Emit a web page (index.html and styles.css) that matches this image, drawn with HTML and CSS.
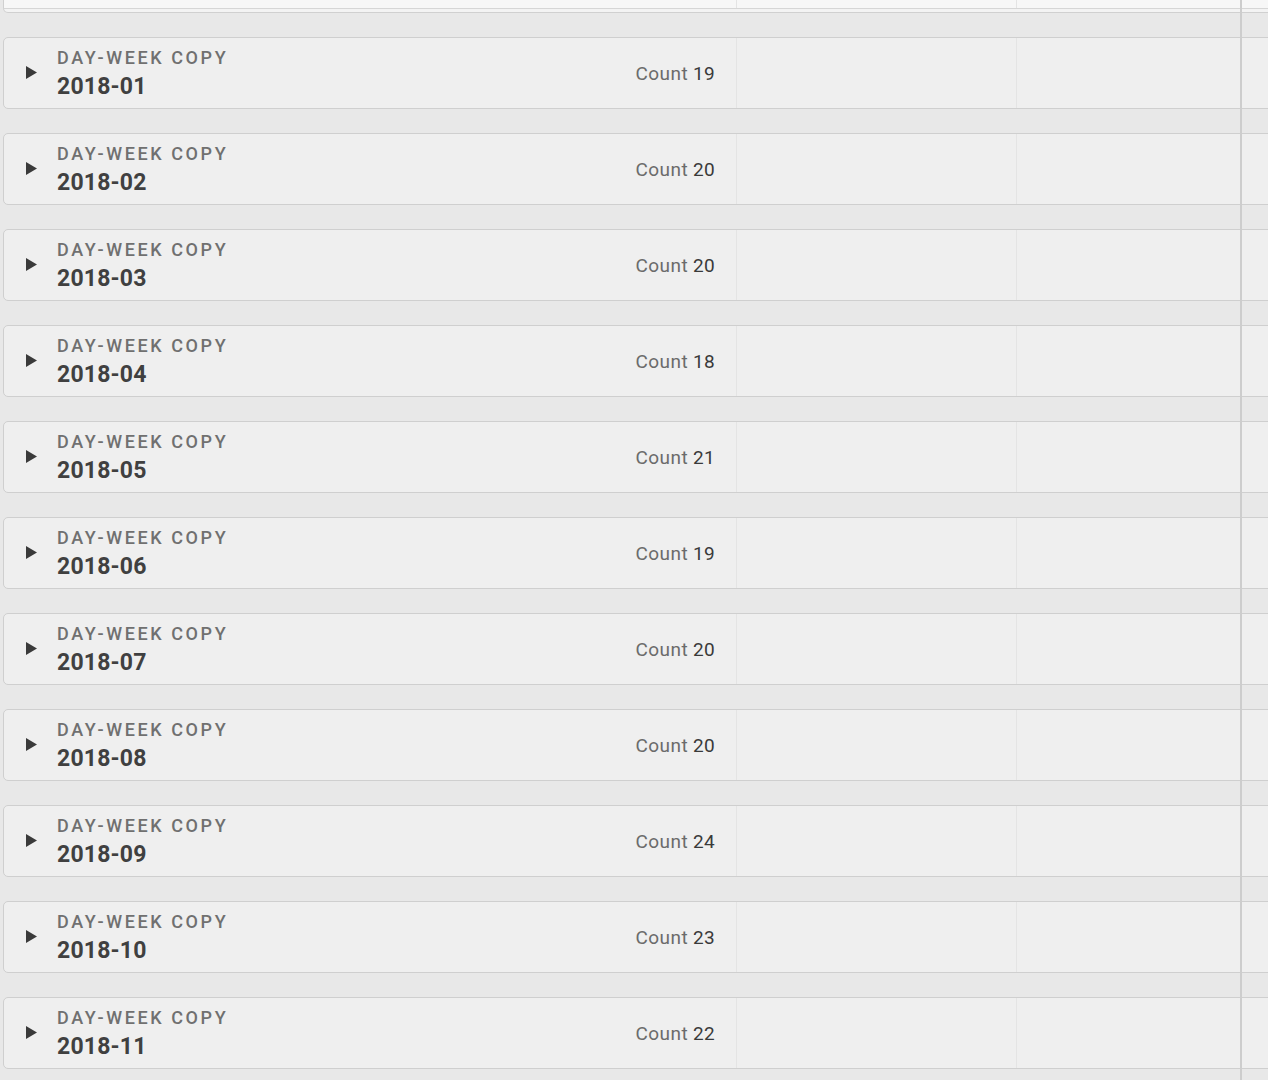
FILE: index.html
```html
<!DOCTYPE html>
<html>
<head>
<meta charset="utf-8">
<link rel="stylesheet" href="styles.css">
</head>
<body>
<div class="board">
  <div class="card-tail">
    <div class="tail-row">
      <div class="tail-cell c1"></div>
      <div class="tail-cell c2"></div>
      <div class="tail-cell c3"></div>
    </div>
    <div class="tail-foot"></div>
  </div>

  <div class="groups">
    <div class="group">
      <div class="cell c1">
        <svg class="caret" width="11" height="13" viewBox="0 0 11 13"><polygon points="0,0 11,6.5 0,13" fill="#3a3a3a"/></svg>
        <div class="titles"><div class="label">DAY-WEEK COPY</div><div class="value">2018-01</div></div>
        <div class="count"><span class="count-word">Count</span> <span class="count-num">19</span></div>
      </div>
      <div class="cell c2"></div><div class="cell c3"></div>
    </div>
    <div class="group">
      <div class="cell c1">
        <svg class="caret" width="11" height="13" viewBox="0 0 11 13"><polygon points="0,0 11,6.5 0,13" fill="#3a3a3a"/></svg>
        <div class="titles"><div class="label">DAY-WEEK COPY</div><div class="value">2018-02</div></div>
        <div class="count"><span class="count-word">Count</span> <span class="count-num">20</span></div>
      </div>
      <div class="cell c2"></div><div class="cell c3"></div>
    </div>
    <div class="group">
      <div class="cell c1">
        <svg class="caret" width="11" height="13" viewBox="0 0 11 13"><polygon points="0,0 11,6.5 0,13" fill="#3a3a3a"/></svg>
        <div class="titles"><div class="label">DAY-WEEK COPY</div><div class="value">2018-03</div></div>
        <div class="count"><span class="count-word">Count</span> <span class="count-num">20</span></div>
      </div>
      <div class="cell c2"></div><div class="cell c3"></div>
    </div>
    <div class="group">
      <div class="cell c1">
        <svg class="caret" width="11" height="13" viewBox="0 0 11 13"><polygon points="0,0 11,6.5 0,13" fill="#3a3a3a"/></svg>
        <div class="titles"><div class="label">DAY-WEEK COPY</div><div class="value">2018-04</div></div>
        <div class="count"><span class="count-word">Count</span> <span class="count-num">18</span></div>
      </div>
      <div class="cell c2"></div><div class="cell c3"></div>
    </div>
    <div class="group">
      <div class="cell c1">
        <svg class="caret" width="11" height="13" viewBox="0 0 11 13"><polygon points="0,0 11,6.5 0,13" fill="#3a3a3a"/></svg>
        <div class="titles"><div class="label">DAY-WEEK COPY</div><div class="value">2018-05</div></div>
        <div class="count"><span class="count-word">Count</span> <span class="count-num">21</span></div>
      </div>
      <div class="cell c2"></div><div class="cell c3"></div>
    </div>
    <div class="group">
      <div class="cell c1">
        <svg class="caret" width="11" height="13" viewBox="0 0 11 13"><polygon points="0,0 11,6.5 0,13" fill="#3a3a3a"/></svg>
        <div class="titles"><div class="label">DAY-WEEK COPY</div><div class="value">2018-06</div></div>
        <div class="count"><span class="count-word">Count</span> <span class="count-num">19</span></div>
      </div>
      <div class="cell c2"></div><div class="cell c3"></div>
    </div>
    <div class="group">
      <div class="cell c1">
        <svg class="caret" width="11" height="13" viewBox="0 0 11 13"><polygon points="0,0 11,6.5 0,13" fill="#3a3a3a"/></svg>
        <div class="titles"><div class="label">DAY-WEEK COPY</div><div class="value">2018-07</div></div>
        <div class="count"><span class="count-word">Count</span> <span class="count-num">20</span></div>
      </div>
      <div class="cell c2"></div><div class="cell c3"></div>
    </div>
    <div class="group">
      <div class="cell c1">
        <svg class="caret" width="11" height="13" viewBox="0 0 11 13"><polygon points="0,0 11,6.5 0,13" fill="#3a3a3a"/></svg>
        <div class="titles"><div class="label">DAY-WEEK COPY</div><div class="value">2018-08</div></div>
        <div class="count"><span class="count-word">Count</span> <span class="count-num">20</span></div>
      </div>
      <div class="cell c2"></div><div class="cell c3"></div>
    </div>
    <div class="group">
      <div class="cell c1">
        <svg class="caret" width="11" height="13" viewBox="0 0 11 13"><polygon points="0,0 11,6.5 0,13" fill="#3a3a3a"/></svg>
        <div class="titles"><div class="label">DAY-WEEK COPY</div><div class="value">2018-09</div></div>
        <div class="count"><span class="count-word">Count</span> <span class="count-num">24</span></div>
      </div>
      <div class="cell c2"></div><div class="cell c3"></div>
    </div>
    <div class="group">
      <div class="cell c1">
        <svg class="caret" width="11" height="13" viewBox="0 0 11 13"><polygon points="0,0 11,6.5 0,13" fill="#3a3a3a"/></svg>
        <div class="titles"><div class="label">DAY-WEEK COPY</div><div class="value">2018-10</div></div>
        <div class="count"><span class="count-word">Count</span> <span class="count-num">23</span></div>
      </div>
      <div class="cell c2"></div><div class="cell c3"></div>
    </div>
    <div class="group">
      <div class="cell c1">
        <svg class="caret" width="11" height="13" viewBox="0 0 11 13"><polygon points="0,0 11,6.5 0,13" fill="#3a3a3a"/></svg>
        <div class="titles"><div class="label">DAY-WEEK COPY</div><div class="value">2018-11</div></div>
        <div class="count"><span class="count-word">Count</span> <span class="count-num">22</span></div>
      </div>
      <div class="cell c2"></div><div class="cell c3"></div>
    </div>
  </div>
  <div class="split-line"></div>
</div>
</body>
</html>
```

FILE: styles.css
```css
html, body {
  margin: 0;
  padding: 0;
  background: #e8e8e8;
  overflow: hidden;
  height: 1080px;
}
body {
  font-family: Roboto, "Liberation Sans", sans-serif;
}
.board {
  position: relative;
  height: 1080px;
  overflow: hidden;
}
.card-tail {
  margin-left: 3px;
  width: 1300px;
  border: 1px solid #d0d0d0;
  border-top: none;
  border-radius: 0 0 0 5px;
  background: #f3f3f3;
}
.tail-row {
  display: grid;
  grid-template-columns: 733px 280px 1fr;
  height: 8px;
  background: #f7f7f7;
  border-bottom: 1px solid #d6d6d6;
}
.tail-cell.c1, .tail-cell.c2 {
  border-right: 1px solid #e4e4e4;
}
.tail-foot {
  height: 3px;
}
.groups {
  display: flex;
  flex-direction: column;
  gap: 24px;
  padding-top: 24px;
}
.group {
  margin-left: 3px;
  width: 1300px;
  height: 70px;
  border: 1px solid #cfcfcf;
  border-radius: 5px 0 0 5px;
  background: #efefef;
  display: grid;
  grid-template-columns: 733px 280px 1fr;
}
.cell.c1, .cell.c2 {
  border-right: 1px solid #e4e4e4;
}
.cell.c1 {
  display: flex;
  align-items: flex-start;
  padding: 0 21px 0 22px;
}
.caret {
  display: block;
  margin-top: 28px;
  flex: none;
}
.titles {
  margin-left: 20px;
  padding-top: 9px;
}
.label {
  font-size: 18px;
  line-height: 22px;
  letter-spacing: 2.6px;
  color: #707070;
  font-weight: 500;
}
.value {
  margin-top: 4px;
  font-size: 23px;
  line-height: 27px;
  font-weight: 700;
  color: #404040;
  letter-spacing: 0.2px;
}
.count {
  margin-left: auto;
  margin-top: 24px;
  font-size: 19px;
  line-height: 24px;
  white-space: nowrap;
}
.count-word {
  color: #6b6b6b;
  letter-spacing: 0.5px;
}
.count-num {
  color: #3a3a3a;
  font-weight: 400;
  letter-spacing: 0.3px;
}
.split-line {
  position: absolute;
  left: 1240px;
  top: 0;
  bottom: 0;
  width: 2px;
  background: #cdcdcd;
}
```
